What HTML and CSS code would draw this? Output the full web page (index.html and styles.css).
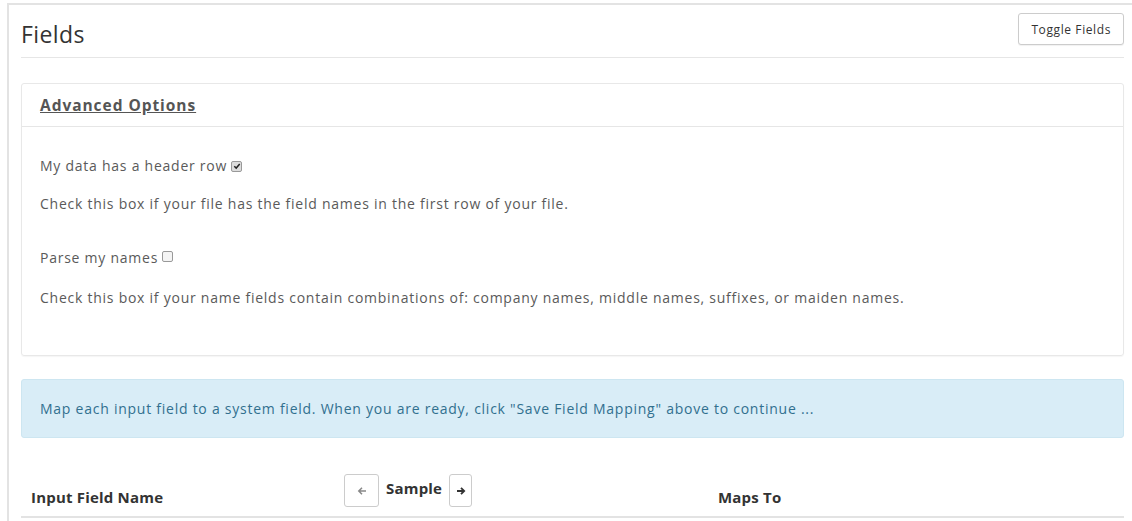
FILE: index.html
```html
<!DOCTYPE html>
<html lang="en">
<head>
<meta charset="utf-8">
<title>Fields</title>
<link rel="stylesheet" href="styles.css">
</head>
<body>
<div class="frame">
  <div class="page-header">
    <h2 class="page-title">Fields</h2>
    <button class="btn btn-sm" type="button">Toggle Fields</button>
  </div>

  <div class="panel">
    <div class="panel-heading"><a class="panel-link" href="#">Advanced Options</a></div>
    <div class="panel-body">
      <p class="opt-label">My data has a header row <span class="check checked"><svg viewBox="0 0 10 10" width="8" height="8"><path d="M1.6 5.2 L4 7.6 L8.4 2.4" fill="none" stroke="#222" stroke-width="1.8"/></svg></span></p>
      <p class="opt-help">Check this box if your file has the field names in the first row of your file.</p>
      <p class="opt-label opt-gap">Parse my names <span class="check"></span></p>
      <p class="opt-help opt-help-last">Check this box if your name fields contain combinations of: company names, middle names, suffixes, or maiden names.</p>
    </div>
  </div>

  <div class="alert">Map each input field to a system field. When you are ready, click "Save Field Mapping" above to continue ...</div>

  <div class="map-head">
    <div class="col col-name">Input Field Name</div>
    <div class="col col-sample">
      <button class="btn btn-arrow" type="button"><svg viewBox="0 0 10 10" width="10" height="10"><path d="M9 5 H2 M5 1.8 L1.8 5 L5 8.2" fill="none" stroke="#888" stroke-width="1.5"/></svg></button>
      <span class="sample-label">Sample</span>
      <button class="btn btn-arrow btn-arrow-next" type="button"><svg viewBox="0 0 10 10" width="10" height="10"><path d="M1 5 H8 M5 1.8 L8.2 5 L5 8.2" fill="none" stroke="#333" stroke-width="1.8"/></svg></button>
    </div>
    <div class="col col-maps">Maps To</div>
  </div>
</div>
</body>
</html>
```

FILE: styles.css
```css
html, body {
  margin: 0;
  padding: 0;
  background: #fff;
}

body {
  font-family: "Open Sans", "Noto Sans", sans-serif;
  font-size: 14px;
  letter-spacing: 0.75px;
  color: #5a5a5a;
  overflow: hidden;
}

.frame {
  margin: 3px 0 0 7px;
  border-top: 2px solid #e3e3e3;
  border-left: 2px solid #e3e3e3;
  padding: 0 8px 0 12px;
  box-sizing: border-box;
  height: calc(100vh - 3px);
}

.page-header {
  display: flex;
  justify-content: space-between;
  align-items: flex-start;
  height: 52px;
  border-bottom: 1px solid #e6e6e6;
}

.page-title {
  margin: 14px 0 0 0;
  font-size: 23px;
  line-height: 30px;
  font-weight: 400;
  letter-spacing: 0.4px;
  color: #333;
}

.btn {
  font-family: inherit;
  background: #fff;
  border: 1px solid #ccc;
  border-radius: 3px;
  color: #333;
  cursor: pointer;
}

.btn-sm {
  font-size: 12px;
  letter-spacing: 0.6px;
  height: 32px;
  padding: 0 12px;
  margin-top: 8px;
  box-shadow: 0 1px 1px rgba(0,0,0,0.06);
}

.panel {
  margin-top: 25px;
  border: 1px solid #e8e8e8;
  border-radius: 3px;
  box-shadow: 0 1px 1px rgba(0,0,0,0.04);
}

.panel-heading {
  height: 42px;
  display: flex;
  align-items: center;
  padding: 0 18px;
  border-bottom: 1px solid #e6e6e6;
}

.panel-link {
  font-size: 15.5px;
  font-weight: 700;
  letter-spacing: 0.95px;
  color: #555;
  text-decoration: underline;
}

.panel-body {
  padding: 29px 18px 47px;
}

.panel-body p {
  margin: 0;
}

.opt-label {
  line-height: 20px;
}

.opt-help {
  margin-top: 18px !important;
  line-height: 20px;
}

.opt-help-last {
  margin-top: 20px !important;
}

.opt-gap {
  margin-top: 34px !important;
}

.check {
  display: inline-flex;
  align-items: center;
  justify-content: center;
  width: 9px;
  height: 9px;
  border: 1px solid #999;
  border-radius: 2px;
  background: #f4f4f4;
  vertical-align: 1px;
}

.check.checked {
  background: #ddd;
}

.alert {
  margin-top: 23px;
  height: 59px;
  box-sizing: border-box;
  padding: 0 18px;
  display: flex;
  align-items: center;
  background: #d9edf7;
  border: 1px solid #cde6f1;
  border-radius: 3px;
  color: #31708f;
}

.map-head {
  margin-top: 36px;
  display: flex;
  align-items: flex-end;
  height: 42px;
  border-bottom: 2px solid #e3e3e3;
  font-weight: 700;
  color: #333;
  font-size: 15px;
  letter-spacing: 0.2px;
}

.col {
  padding: 0 10px 9px;
}

.col-name {
  width: 293px;
}

.col-sample {
  width: 330px;
  display: flex;
  align-items: center;
  gap: 7px;
  align-self: flex-start;
  padding-bottom: 0;
}

.btn-arrow {
  width: 35px;
  height: 33px;
  display: flex;
  align-items: center;
  justify-content: center;
  padding: 0;
}

.btn-arrow-next {
  width: 23px;
}

.sample-label {
  margin-top: -6px;
}

.col-maps {
  padding-left: 34px;
}
```
